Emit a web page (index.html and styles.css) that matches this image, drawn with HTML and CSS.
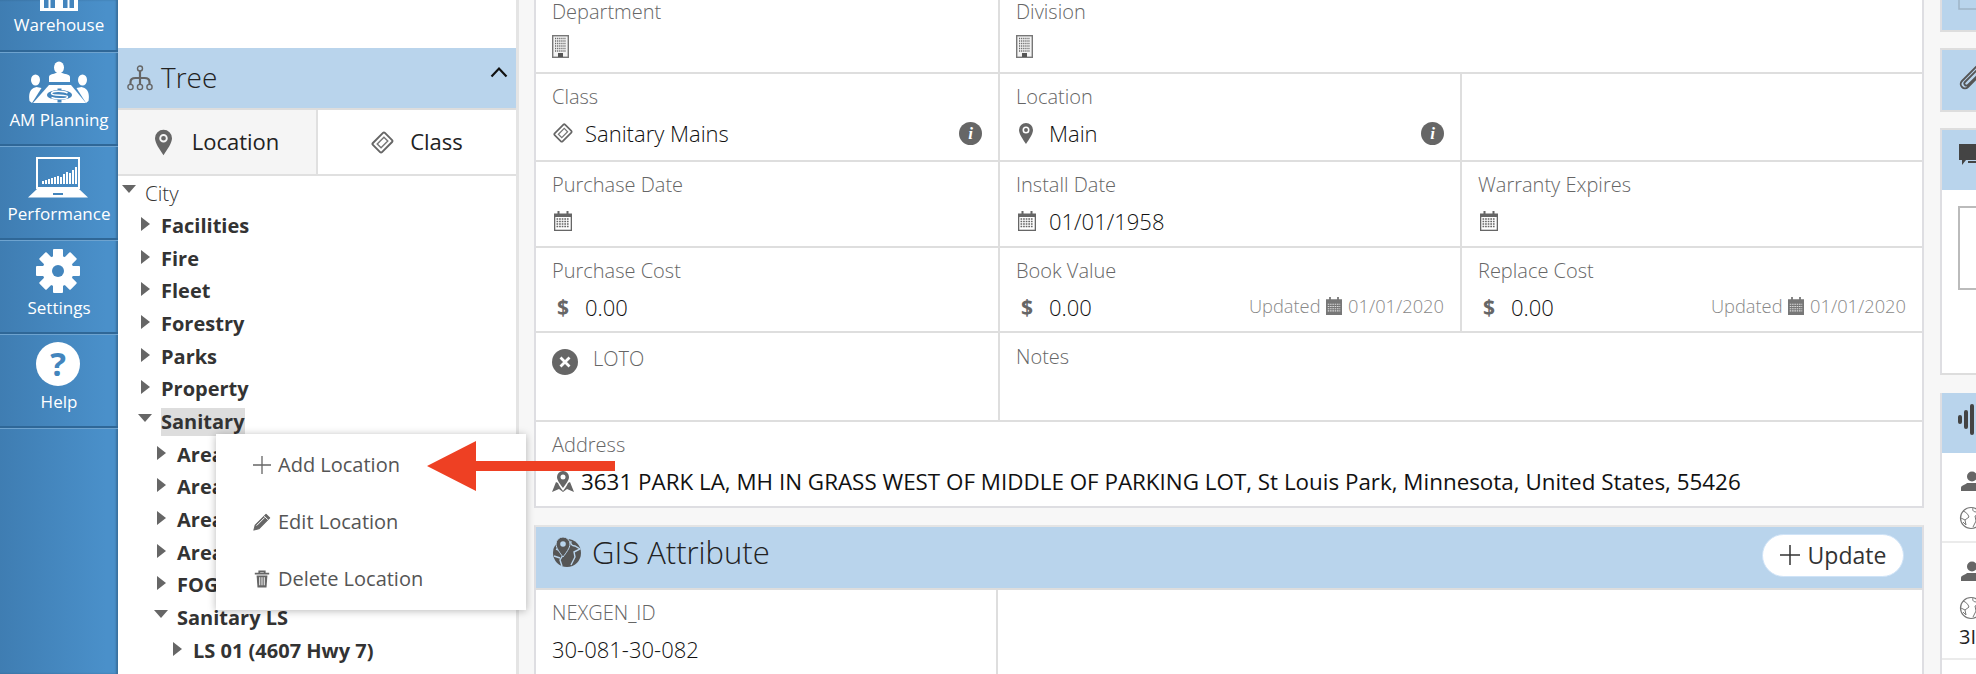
FILE: index.html
```html
<!DOCTYPE html>
<html lang="en">
<head>
<meta charset="utf-8">
<title>Asset</title>
<link rel="stylesheet" href="styles.css">
</head>
<body>
<svg class="defs" width="0" height="0" aria-hidden="true">
  <symbol id="i-building" viewBox="0 0 17 23">
    <rect x=".7" y=".7" width="15.600" height="21.600" fill="#f4f4f4" stroke="#777" stroke-width="1.400"/>
    <path d="M3 3.500h11M3 6h11M3 8.500h11M3 11h11M3 13.500h11M3 16h11" stroke="#666" stroke-width="1.300" stroke-dasharray="1.200 .9"/>
    <rect x="6" y="18" width="5" height="4" fill="#555"/>
  </symbol>
  <symbol id="i-tag" viewBox="0 0 24 24">
    <path d="M14.500 2 22 9.500c.6.600.6 1.400 0 2L11.500 22c-.6.600-1.400.6-2 0L2 14.500c-.6-.6-.6-1.400 0-2L12.500 2c.6-.6 1.400-.6 2 0z" fill="none" stroke="#666" stroke-width="2"/>
    <path d="M13.500 6.500 17.500 10.500 10.500 17.500 6.500 13.500z" fill="none" stroke="#777" stroke-width="1.500"/>
  </symbol>
  <symbol id="i-pin" viewBox="0 0 18 27">
    <path fill-rule="evenodd" d="M9 0a9 9 0 0 1 9 9c0 5-5 12-9 18C5 21 0 14 0 9a9 9 0 0 1 9-9zm0 4.500a4.500 4.500 0 1 0 0 9 4.500 4.500 0 0 0 0-9zm0 2a2.500 2.500 0 1 1 0 5 2.500 2.500 0 0 1 0-5z" fill="#666"/>
  </symbol>
  <symbol id="i-cal" viewBox="0 0 18 20">
    <path d="M0 2.500h3.500V0h2v2.500h7V0h2v2.500H18V20H0z" fill="#666"/>
    <rect x="1.300" y="6" width="15.400" height="12.700" fill="#fff"/>
    <path d="M2.500 8h13M2.500 10.500h13M2.500 13h13M2.500 15.500h13" stroke="#666" stroke-width="1.500" stroke-dasharray="1.700 .9"/>
  </symbol>
  <symbol id="i-cal-solid" viewBox="0 0 18 20">
    <path d="M0 2.500h3.500V0h2v2.500h7V0h2v2.500H18V20H0z" fill="#777"/>
    <path d="M2 8h14M2 10.500h14M2 13h14M2 15.500h14" stroke="#ddd" stroke-width="1.200" stroke-dasharray="1.700 .9"/>
  </symbol>
  <symbol id="i-user" viewBox="0 0 20 20">
    <circle cx="11" cy="5.500" r="5" fill="#666"/>
    <path d="M0 20v-3c0-3 4-3 6-5h10c2 2 4 2 4 5v3z" fill="#666"/>
  </symbol>
  <symbol id="i-globe" viewBox="0 0 24 24">
    <circle cx="12" cy="12" r="10.500" fill="none" stroke="#777" stroke-width="1.200"/>
    <path d="M4 5c3 1 5 3 6 6l-4 3 1 5-3-3M14 2c-1 3 1 4 4 4l3 2-5 2 1 5-3 6M2 12l4 2" fill="none" stroke="#777"/>
  </symbol>
</svg>

<nav class="nav">
  <a class="nav-item nav-first">
    <svg class="nav-ware" viewBox="0 0 38 11"><path d="M0 0h38v11H0z" fill="#fff"/><rect x="4" y="0" width="11" height="8" fill="#4385bd"/><rect x="23" y="0" width="11" height="8" fill="#4385bd"/><rect x="8.500" y="0" width="2" height="8" fill="#fff"/><rect x="27.500" y="0" width="2" height="8" fill="#fff"/></svg>
    <span>Warehouse</span>
  </a>
  <a class="nav-item">
    <svg class="nav-icon" viewBox="0 0 60 50">
      <g fill="#fff">
        <ellipse cx="30" cy="8.500" rx="5" ry="6"/>
        <path d="M20 23v-5c0-3 5-3 7-4h6c2 1 8 1 8 4v5z"/>
        <ellipse cx="6.500" cy="21" rx="4.500" ry="5.500"/>
        <ellipse cx="53.500" cy="21" rx="4.500" ry="5.500"/>
        <path d="M.5 42c-1-6 0-11 4-13l3-1 5 1L3 44z"/>
        <path d="M59.500 42c1-6 0-11-4-13l-3-1-5 1L57 44z"/>
        <path d="M20 26h22l15 18H4z"/>
      </g>
      <ellipse cx="30.500" cy="36" rx="12.500" ry="5" fill="#4385bd"/>
      <rect x="28.500" y="29.500" width="4" height="14" fill="#4385bd"/>
      <path d="M38.500 34c-4-2.500-16-2.500-16 .5 0 3 16 .5 16 3.200 0 2.500-11 2.800-16 .8" stroke="#fff" stroke-width="1.500" fill="none"/>
    </svg>
    <span>AM Planning</span>
  </a>
  <a class="nav-item">
    <svg class="nav-icon" viewBox="0 0 60 50">
      <rect x="8" y="5" width="42" height="30" fill="none" stroke="#fff" stroke-width="2"/>
      <path d="M14 31v-3M17 31v-4M20 31v-5M23 31v-6M26 31v-7M29 31v-8M32 31v-7M35 31v-10M38 31v-12M41 31v-11M44 31v-14M47 31v-17" stroke="#fff" stroke-width="2"/>
      <path d="M8 36h42l9 8.500H-1z" fill="#fff"/>
      <rect x="24" y="40" width="10" height="2" fill="#4385bd"/>
    </svg>
    <span>Performance</span>
  </a>
  <a class="nav-item">
    <svg class="nav-icon" viewBox="0 0 60 50">
      <g fill="#fff">
        <circle cx="29" cy="24" r="15.500"/>
        <rect x="24" y="2" width="10" height="44" rx="1"/>
        <rect x="24" y="2" width="10" height="44" rx="1" transform="rotate(45 29 24)"/>
        <rect x="24" y="2" width="10" height="44" rx="1" transform="rotate(90 29 24)"/>
        <rect x="24" y="2" width="10" height="44" rx="1" transform="rotate(135 29 24)"/>
      </g>
      <circle cx="29" cy="24" r="6" fill="#4385bd"/>
    </svg>
    <span>Settings</span>
  </a>
  <a class="nav-item">
    <svg class="nav-icon" viewBox="0 0 60 50">
      <circle cx="29" cy="23" r="22" fill="#fff"/>
      <text x="29" y="35" text-anchor="middle" class="help-q">?</text>
    </svg>
    <span>Help</span>
  </a>
  <div class="nav-rest"></div>
</nav>

<aside class="tree-panel">
  <div class="tree-space"></div>
  <header class="tree-head">
    <svg class="tree-icon" viewBox="0 0 26 26">
      <g fill="none" stroke="#666" stroke-width="1.400">
        <circle cx="13" cy="3.500" r="2.500"/>
        <circle cx="3.500" cy="22" r="2.600"/><circle cx="13" cy="22" r="2.600"/><circle cx="22.500" cy="22" r="2.600"/>
      </g>
      <path d="M13 6v13.500M3.500 19.500V17c0-3 2-4 5-4h9c3 0 5 1 5 4v2.500" fill="none" stroke="#666" stroke-width="2.200"/>
    </svg>
    <h2 class="tree-title">Tree</h2>
    <svg class="chev" viewBox="0 0 18 12"><path d="M1.500 10.500 9 2.500l7.500 8" fill="none" stroke="#111" stroke-width="2.200"/></svg>
  </header>
  <div class="tabs">
    <div class="tab tab-on"><svg class="tab-pin"><use href="#i-pin"/></svg><span>Location</span></div>
    <div class="tab"><svg class="tab-tag"><use href="#i-tag"/></svg><span>Class</span></div>
  </div>
  <ul class="tree">
    <li class="row root"><i class="down"></i><span class="root-name">City</span></li>
    <li class="row l1"><i class="right"></i><b>Facilities</b></li>
    <li class="row l1"><i class="right"></i><b>Fire</b></li>
    <li class="row l1"><i class="right"></i><b>Fleet</b></li>
    <li class="row l1"><i class="right"></i><b>Forestry</b></li>
    <li class="row l1"><i class="right"></i><b>Parks</b></li>
    <li class="row l1"><i class="right"></i><b>Property</b></li>
    <li class="row l1 open"><i class="down"></i><b class="sel">Sanitary</b></li>
    <li class="row l2"><i class="right"></i><b>Area 1</b></li>
    <li class="row l2"><i class="right"></i><b>Area 2</b></li>
    <li class="row l2"><i class="right"></i><b>Area 3</b></li>
    <li class="row l2"><i class="right"></i><b>Area 4</b></li>
    <li class="row l2"><i class="right"></i><b>FOG</b></li>
    <li class="row l2 open"><i class="down"></i><b>Sanitary LS</b></li>
    <li class="row l3"><i class="right"></i><b>LS 01 (4607 Hwy 7)</b></li>
  </ul>
  <div class="menu">
    <div class="menu-item"><svg class="menu-icon" viewBox="0 0 18 18"><path d="M9 0v18M0 9h18" stroke="#666" stroke-width="1.300"/></svg><span>Add Location</span></div>
    <div class="menu-item"><svg class="menu-icon" viewBox="0 0 20 20"><path d="M14.500 1.500 18.500 5.500 6.500 17.500 1 19 2.500 13.500z" fill="#666" stroke="#666" stroke-width="1.200" stroke-linejoin="round"/><path d="M12.500 3.500 16.500 7.500M4 14l9-9" stroke="#fff" stroke-width="1.100"/></svg><span>Edit Location</span></div>
    <div class="menu-item"><svg class="menu-icon" viewBox="0 0 18 20"><path d="M1 4h16M6 4V1.500h6V4" fill="none" stroke="#666" stroke-width="2"/><path d="M3 6h12l-1 13.500H4z" fill="#666"/><path d="M6.500 8v9M9 8v9M11.500 8v9" stroke="#fff" stroke-width="1.100"/></svg><span>Delete Location</span></div>
  </div>
</aside>

<main class="main">
  <section class="card grid">
    <div class="cell r1"><label>Department</label><div class="val top"><svg class="ico ic-b"><use href="#i-building"/></svg></div></div>
    <div class="cell r1 span2 last"><label>Division</label><div class="val top"><svg class="ico ic-b"><use href="#i-building"/></svg></div></div>

    <div class="cell r2"><label>Class</label><div class="val"><span class="slot"><svg class="ic-t"><use href="#i-tag"/></svg></span><span>Sanitary Mains</span><span class="info">i</span></div></div>
    <div class="cell r2"><label>Location</label><div class="val"><span class="slot"><svg class="ic-p"><use href="#i-pin"/></svg></span><span>Main</span><span class="info">i</span></div></div>
    <div class="cell r2 last"></div>

    <div class="cell r3"><label>Purchase Date</label><div class="val"><span class="slot"><svg class="ic-c"><use href="#i-cal"/></svg></span></div></div>
    <div class="cell r3"><label>Install Date</label><div class="val"><span class="slot"><svg class="ic-c"><use href="#i-cal"/></svg></span><span>01/01/1958</span></div></div>
    <div class="cell r3 last"><label>Warranty Expires</label><div class="val"><span class="slot"><svg class="ic-c"><use href="#i-cal"/></svg></span></div></div>

    <div class="cell r4"><label>Purchase Cost</label><div class="val"><span class="slot dollar">$</span><span>0.00</span></div></div>
    <div class="cell r4"><label>Book Value</label><div class="val"><span class="slot dollar">$</span><span>0.00</span><span class="upd">Updated <svg class="ic-u"><use href="#i-cal-solid"/></svg> 01/01/2020</span></div></div>
    <div class="cell r4 last"><label>Replace Cost</label><div class="val"><span class="slot dollar">$</span><span>0.00</span><span class="upd">Updated <svg class="ic-u"><use href="#i-cal-solid"/></svg> 01/01/2020</span></div></div>

    <div class="cell r5 loto"><svg class="ic-x" viewBox="0 0 26 26"><circle cx="13" cy="13" r="13" fill="#666"/><path d="M8.500 8.500l9 9M17.500 8.500l-9 9" stroke="#fff" stroke-width="2.800"/></svg><label>LOTO</label></div>
    <div class="cell r5 span2 last"><label>Notes</label></div>

    <div class="cell r6 span3 last"><label>Address</label>
      <div class="val addr">
        <svg class="ic-a" viewBox="0 0 22 21"><path fill-rule="evenodd" d="M11 0a6 6 0 0 1 6 6c0 3-3 7-6 11-3-4-6-8-6-11a6 6 0 0 1 6-6zm0 3.500a2.500 2.500 0 1 0 0 5 2.500 2.500 0 0 0 0-5z" fill="#666"/><path d="M4 11 0 21l7-3 4 3 4-3 7 3-4-10-2 1c-1 3-3 5-5 8-2-3-4-5-5-8z" fill="#666"/></svg>
        <span>3631 PARK LA, MH IN GRASS WEST OF MIDDLE OF PARKING LOT, St Louis Park, Minnesota, United States, 55426</span>
      </div>
    </div>
  </section>

  <section class="card gis">
    <header class="gis-head">
      <svg class="gis-icon" viewBox="0 0 30 31">
        <circle cx="15" cy="16" r="14" fill="#555"/>
        <path d="M4 12c3 1 6 3 7 6l-3 5 2 6M19 4c-1 3 1 5 4 5l5 3-6 3 1 5-4 8M2 19l6 2" fill="none" stroke="#b9d4ec" stroke-width="1.400"/>
        <path d="M11 0a7 7 0 0 1 7 7c0 4-4 9-7 13-3-4-7-9-7-13a7 7 0 0 1 7-7z" fill="#555" stroke="#b9d4ec"/>
        <circle cx="11" cy="7" r="2.800" fill="#b9d4ec"/>
      </svg>
      <h2 class="gis-title">GIS Attribute</h2>
      <button class="update"><svg class="upd-plus" viewBox="0 0 20 20"><path d="M10 0v20M0 10h20" stroke="#333" stroke-width="1.500"/></svg>Update</button>
    </header>
    <div class="gis-body">
      <div class="gis-cell"><label>NEXGEN_ID</label><div class="gis-val">30-081-30-082</div></div>
    </div>
  </section>
</main>

<aside class="side">
  <div class="s-card s-a"><svg class="s-note" viewBox="0 0 24 10"><path d="M1 0v9h22" fill="none" stroke="#9fb4c6" stroke-width="1.500"/></svg></div>
  <div class="s-card s-b"><svg class="s-clip" viewBox="0 0 28 26"><path d="M19 5 7 17c-2 2 1 5 3 3L23 7c3-3-2-8-5-5L4 16c-4 4 2 10 6 6L21 11" fill="none" stroke="#555" stroke-width="1.800" stroke-linecap="round"/></svg></div>
  <div class="s-card s-c">
    <div class="s-head"><svg class="s-bubble" viewBox="0 0 28 22"><path d="M1 0h18v16H8l-4 5v-5H1z" fill="#444"/><path d="M10 18h18" stroke="#444" stroke-width="2"/></svg></div>
    <div class="s-box"></div>
  </div>
  <div class="s-card s-d">
    <div class="s-head s-head-d"><svg class="s-wave" viewBox="0 0 20 32"><rect x="0" y="11" width="4" height="9" rx="2" fill="#444"/><rect x="6" y="6" width="4" height="19" rx="2" fill="#444"/><rect x="12" y="0" width="4" height="31" rx="2" fill="#444"/></svg></div>
    <div class="s-row s-row-1"><svg class="s-u"><use href="#i-user"/></svg><svg class="s-g"><use href="#i-globe"/></svg></div>
    <div class="s-row"><svg class="s-u"><use href="#i-user"/></svg><svg class="s-g"><use href="#i-globe"/></svg><div class="s-text">3I</div></div>
  </div>
</aside>

<svg class="arrow" viewBox="0 0 188 50"><path d="M0 25 49 0v20h139v10H49v20z" fill="#ee4023"/></svg>
</body>
</html>
```
FILE: styles.css
```css
* { box-sizing: border-box; }
html, body { margin: 0; padding: 0; }
body {
  width: 1976px;
  height: 674px;
  overflow: hidden;
  display: flex;
  position: relative;
  font-family: "Open Sans", "Liberation Sans", sans-serif;
  background: #f7f7f7;
  color: #222;
}
.defs { position: absolute; }
h2 { margin: 0; font-weight: 300; }
label { display: block; }

/* nav */
.nav {
  width: 118px;
  flex: none;
  background: linear-gradient(90deg, #3f7db2 0%, #4a90ca 90%, #4a90ca 100%);
  box-shadow: inset -2px 0 2px rgba(0,0,0,.22);
  display: flex;
  flex-direction: column;
  color: #fff;
}
.nav-item {
  height: 94px;
  flex: none;
  display: flex;
  flex-direction: column;
  align-items: center;
  justify-content: flex-end;
  padding-bottom: 13px;
  border-top: 1px solid #6ea3cf;
  border-bottom: 2px solid #2f6797;
  overflow: hidden;
}
.nav-first { height: 52px; border-top: 0; padding-bottom: 14px; }
.nav-item span { font-size: 17px; line-height: 22px; }
.nav-icon { width: 60px; height: 50px; flex: none; overflow: visible; }
.nav-ware { width: 38px; height: 11px; flex: none; margin-bottom: 3px; }
.nav-rest { flex: 1; border-top: 1px solid #6ea3cf; }
.help-q { font: 700 33px "Open Sans", sans-serif; fill: #4385bd; }

/* tree panel */
.tree-panel {
  width: 401px;
  flex: none;
  background: #fff;
  border-right: 3px solid #e4e4e4;
  position: relative;
  z-index: 1;
}
.tree-space { height: 48px; }
.tree-head {
  height: 62px;
  background: #b9d4ec;
  border-bottom: 2px solid #ddd;
  display: flex;
  align-items: center;
  padding: 0 8px 0 9px;
}
.tree-icon { width: 26px; height: 26px; margin-right: 8px; flex: none; }
.tree-title { font-size: 28px; color: #222; flex: 1; margin-top: -2px; }
.chev { width: 18px; height: 12px; margin-bottom: 12px; }
.tabs {
  height: 66px;
  display: flex;
  border-bottom: 2px solid #e0e0e0;
}
.tab {
  flex: 1;
  display: flex;
  align-items: center;
  justify-content: center;
  font-size: 22px;
  color: #222;
}
.tab span { margin-top: -2px; }
.tab-on { background: #f5f5f5; border-right: 2px solid #e0e0e0; }
.tab-pin { width: 17px; height: 27px; margin-right: 20px; }
.tab-tag { width: 23px; height: 23px; margin-right: 16px; }

.tree { list-style: none; margin: 0; padding: 0; font-size: 20px; color: #333; }
.row { height: 32.7px; display: flex; align-items: center; position: relative; }
.row b { font-weight: 700; line-height: 28px; }
.root { height: 33.500px; padding-left: 4px; }
.root-name { font-weight: 300; font-size: 20.500px; margin-left: 9px; }
.l1 { padding-left: 23px; }
.l2 { padding-left: 39px; }
.l3 { padding-left: 55px; }
.right {
  width: 0; height: 0; flex: none;
  border-left: 9px solid #666;
  border-top: 7px solid transparent;
  border-bottom: 7px solid transparent;
  margin-right: 11px;
  margin-bottom: 4px;
}
.down {
  width: 0; height: 0; flex: none;
  border-top: 8px solid #666;
  border-left: 7.500px solid transparent;
  border-right: 7.500px solid transparent;
  margin-bottom: 8px;
}
.open { padding-left: 20px; }
.l2.open { padding-left: 36px; }
.open .down { margin-right: 9px; }
.sel { background: #ddd; }

.menu {
  position: absolute;
  left: 98px;
  top: 434px;
  width: 310px;
  height: 176px;
  background: #fff;
  box-shadow: 0 1px 8px rgba(0,0,0,.28);
  padding: 2px 0 0 37px;
  z-index: 3;
  font-size: 20px;
  font-weight: 400;
  color: #555;
}
.menu-item { height: 57px; display: flex; align-items: center; }
.menu-icon { width: 18px; height: 18px; margin-right: 7px; flex: none; }

/* main */
.main { width: 1421px; flex: none; padding: 0 16px 0 15px; }
.card { background: #fff; border: 2px solid #dedee2; border-top: 0; }
.grid {
  display: grid;
  grid-template-columns: 464px 462px 460px;
  grid-template-rows: 74px 88px 86px 85px 89px 84px;
}
.cell { border-right: 2px solid #dedede; border-bottom: 2px solid #dedede; padding: 11px 16px 0 16px; }
.cell label { font-weight: 300; color: #666; line-height: 24px; font-size: 20px; }
.last { border-right: 0; }
.span2 { grid-column: span 2; }
.span3 { grid-column: span 3; border-bottom: 0; }
.r1 { padding-top: 0; }
.r5 { padding-top: 12px; }
.r6 { padding-top: 11px; }
.val { display: flex; align-items: center; height: 30px; margin-top: 9px; font-size: 22px; font-weight: 300; color: #111; }
.val.top { margin-top: 7px; }
.slot { width: 33px; flex: none; display: flex; align-items: center; }
.ico { display: block; }
.ic-b { width: 17px; height: 23px; }
.ic-t { width: 20px; height: 20px; margin-left: 1px; }
.ic-p { width: 14px; height: 21px; margin-left: 3px; }
.ic-c { width: 18px; height: 20px; margin-left: 2px; }
.dollar { font-weight: 700; font-size: 21px; color: #666; padding-left: 5px; }
.info {
  width: 23px; height: 23px;
  margin-left: auto;
  border-radius: 50%;
  background: #666;
  color: #fff;
  text-align: center;
  font: italic 700 17px/23px "Liberation Serif", serif;
}
.upd { margin-left: auto; margin-bottom: 3px; font-size: 18.300px; font-weight: 300; color: #888; display: flex; align-items: center; white-space: pre; }
.ic-u { width: 16px; height: 18px; margin: 0 1px; }
.loto { display: flex; padding-top: 14px; }
.loto label { margin-left: 15px; }
.ic-x { width: 26px; height: 26px; flex: none; margin-top: 2px; }
.addr { margin-top: 9px; font-size: 22.400px; font-weight: 400; }
.ic-a { width: 22px; height: 21px; margin-right: 7px; flex: none; }

.gis { margin-top: 17px; border-top: 2px solid #e4e4e4; }
.gis-head {
  height: 63px;
  background: #b9d4ec;
  border-bottom: 2px solid #ddd;
  display: flex;
  align-items: center;
  padding: 0 18px 0 16px;
}
.gis-icon { width: 30px; height: 31px; margin-right: 10px; margin-top: -11px; }
.gis-title { font-size: 31px; flex: 1; color: #222; margin-top: -12px; }
.update {
  width: 142px;
  height: 43px;
  border-radius: 22px;
  border: 1px solid #cfe3f7;
  background: #fff;
  font: 400 23px "Open Sans", sans-serif;
  color: #333;
  display: flex;
  align-items: center;
  justify-content: center;
  margin-top: -5px;
}
.upd-plus { width: 20px; height: 20px; margin-right: 8px; }
.gis-body { display: flex; height: 90px; }
.gis-cell { width: 462px; border-right: 2px solid #dedede; padding: 11px 16px; }
.gis-cell label { font-weight: 300; color: #666; font-size: 20px; line-height: 24px; }
.gis-val { font-size: 22px; font-weight: 300; color: #111; margin-top: 9px; line-height: 30px; }

/* side */
.side { width: 36px; flex: none; overflow: hidden; padding: 0; }
.s-card { width: 60px; border-left: 2px solid #dedee2; background: #fff; }
.s-a { height: 32px; background: #b9d4ec; border-bottom: 2px solid #ddd; padding: 0 0 0 16px; }
.s-note { display: block; width: 24px; height: 10px; }
.s-b { height: 64px; margin-top: 16px; background: #b9d4ec; border-top: 2px solid #ddd; border-bottom: 2px solid #ddd; padding: 15px 0 0 16px; }
.s-clip { display: block; width: 28px; height: 26px; }
.s-c { height: 247px; margin-top: 16px; border-top: 2px solid #ddd; border-bottom: 2px solid #ddd; }
.s-head { height: 60px; background: #b9d4ec; padding: 14px 0 0 16px; }
.s-bubble { display: block; width: 28px; height: 22px; }
.s-box { margin: 16px 0 0 16px; height: 84px; border: 2px solid #bbb; }
.s-d { height: 282px; margin-top: 18px; }
.s-head-d { height: 60px; padding-top: 11px; }
.s-wave { display: block; width: 20px; height: 32px; }
.s-row { padding: 18px 0 0 19px; border-bottom: 2px solid #ebebeb; height: 90px; }
.s-row + .s-row { height: 117px; padding-top: 18px; }
.s-u { display: block; width: 20px; height: 20px; }
.s-g { display: block; width: 24px; height: 24px; margin: 15px 0 0 -2px; }
.s-text { font-size: 20px; margin: 3px 0 0 -2px; }

.arrow { position: absolute; left: 427px; top: 441px; width: 188px; height: 50px; z-index: 5; }
```
